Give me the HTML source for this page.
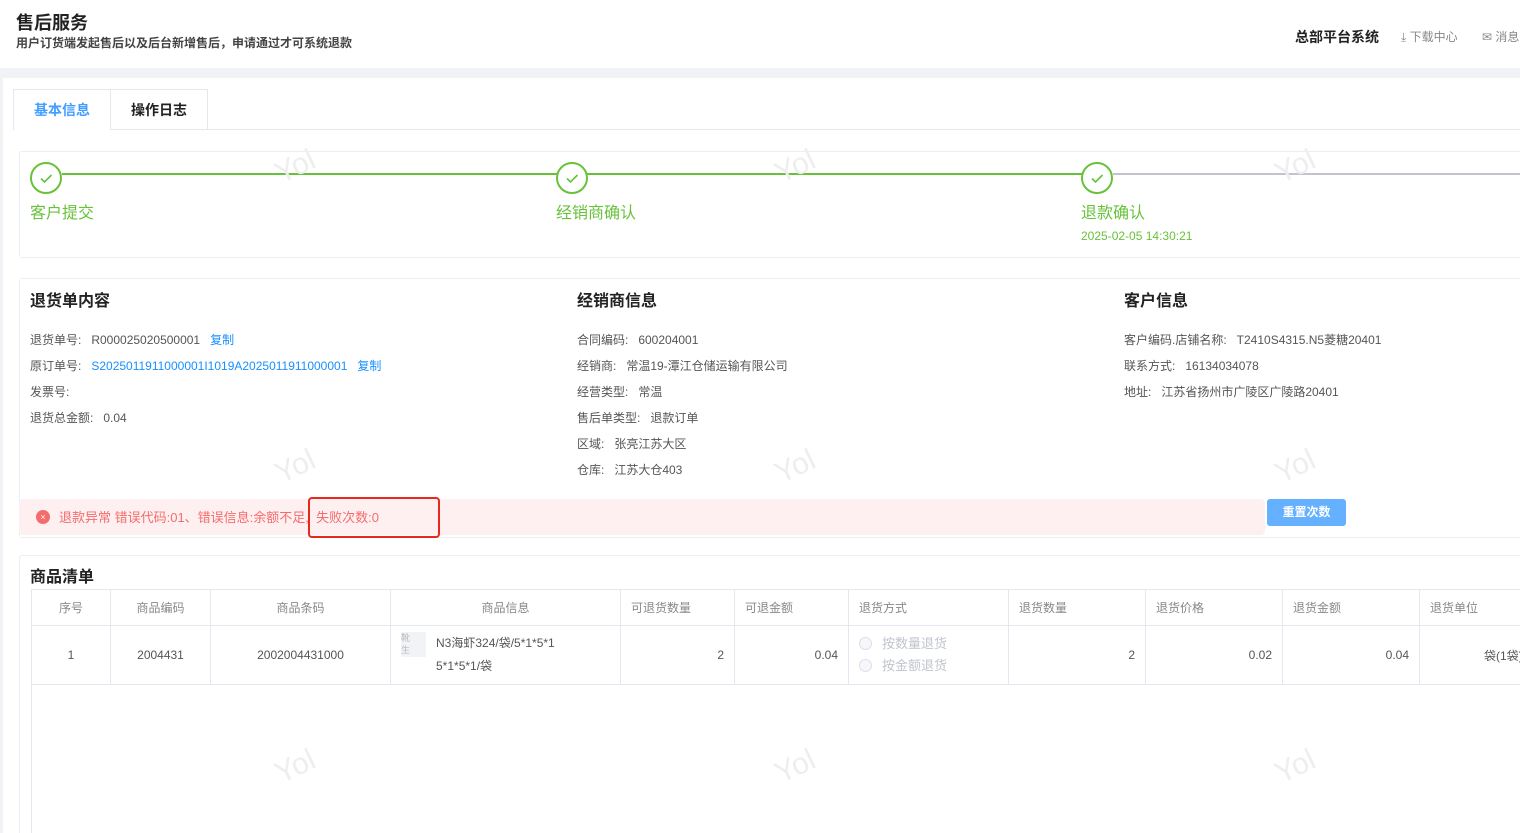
<!DOCTYPE html>
<html><head><meta charset="utf-8"><style>
*{margin:0;padding:0;box-sizing:border-box}
html,body{width:1520px;height:833px;overflow:hidden}
body{background:#f0f2f5;font-family:"Liberation Sans","Noto Sans CJK SC",sans-serif;position:relative;color:#333}
.a{position:absolute;white-space:nowrap}
.hdr{position:absolute;left:0;top:0;width:1520px;height:68px;background:#fff}
.card{position:absolute;left:3px;top:78px;width:1517px;height:755px;background:#fff}
.g{color:#67c23a}
.t13{font-size:12px;color:#555}
.blue{color:#1890ff}
table{border-collapse:collapse;position:absolute;left:31px;top:589px;table-layout:fixed;width:1525px}
td,th{border:1px solid #e4e7ed;font-size:12px;color:#555;font-weight:normal;padding:0 10px}
th{height:36px;color:#888;text-align:left}
td{height:59px}
.wm{position:absolute;color:#eee;font-size:30px;transform:rotate(-25deg)}
</style></head><body>
<div class="hdr">
<div class="a" style="left:16px;top:9px;font-size:18px;font-weight:bold;color:#222">售后服务</div>
<div class="a" style="left:16px;top:34px;font-size:12px;color:#444;font-weight:bold">用户订货端发起售后以及后台新增售后，申请通过才可系统退款</div>
<div class="a" style="left:1295px;top:27px;font-size:14px;font-weight:bold;color:#222">总部平台系统</div>
<div class="a" style="left:1401px;top:28px;font-size:12px;color:#888">⤓ 下载中心</div>
<div class="a" style="left:1482px;top:28px;font-size:12px;color:#888">✉ 消息</div>
</div>
<div class="card"></div>
<div class="a" style="left:13px;top:89px;width:195px;height:41px;border:1px solid #e4e7ed;border-bottom:none;background:#fff"></div>
<div class="a" style="left:110px;top:89px;width:1px;height:41px;background:#e4e7ed"></div>
<div class="a" style="left:208px;top:129px;width:1312px;height:1px;background:#e4e7ed"></div>
<div class="a" style="left:110px;top:129px;width:98px;height:1px;background:#e4e7ed"></div>
<div class="a" style="left:34px;top:100px;font-size:14px;color:#409eff;font-weight:bold">基本信息</div>
<div class="a" style="left:131px;top:100px;font-size:14px;color:#222;font-weight:bold">操作日志</div>
<div class="a" style="left:19px;top:151px;width:1510px;height:107px;border:1px solid #ebeef5;border-radius:3px"></div>
<div class="a" style="left:62px;top:173px;width:1020px;height:2px;background:#67c23a"></div>
<div class="a" style="left:1113px;top:173px;width:410px;height:2px;background:#c0c4cc"></div>
<svg class="a" style="left:30px;top:162px" width="33" height="33"><circle cx="16" cy="16" r="15" fill="#fff" stroke="#67c23a" stroke-width="2"/><path d="M11 16.5l3.5 3.5 7-7" fill="none" stroke="#67c23a" stroke-width="1.6"/></svg>
<svg class="a" style="left:556px;top:162px" width="33" height="33"><circle cx="16" cy="16" r="15" fill="#fff" stroke="#67c23a" stroke-width="2"/><path d="M11 16.5l3.5 3.5 7-7" fill="none" stroke="#67c23a" stroke-width="1.6"/></svg>
<svg class="a" style="left:1081px;top:162px" width="33" height="33"><circle cx="16" cy="16" r="15" fill="#fff" stroke="#67c23a" stroke-width="2"/><path d="M11 16.5l3.5 3.5 7-7" fill="none" stroke="#67c23a" stroke-width="1.6"/></svg>
<div class="a g" style="left:30px;top:199px;font-size:16px">客户提交</div>
<div class="a g" style="left:556px;top:199px;font-size:16px">经销商确认</div>
<div class="a g" style="left:1081px;top:199px;font-size:16px">退款确认</div>
<div class="a g" style="left:1081px;top:229px;font-size:12px">2025-02-05 14:30:21</div>
<div class="a" style="left:19px;top:278px;width:1510px;height:260px;border:1px solid #ebeef5;border-radius:3px"></div>
<div class="a" style="left:30px;top:287px;font-size:16px;font-weight:bold;color:#222">退货单内容</div>
<div class="a" style="left:577px;top:287px;font-size:16px;font-weight:bold;color:#222">经销商信息</div>
<div class="a" style="left:1124px;top:287px;font-size:16px;font-weight:bold;color:#222">客户信息</div>
<div class="a t13" style="left:30px;top:331px">退货单号:&nbsp;&nbsp;&nbsp;R000025020500001&nbsp;&nbsp;&nbsp;<span class="blue">复制</span></div>
<div class="a t13" style="left:30px;top:357px">原订单号:&nbsp;&nbsp;&nbsp;<span class="blue">S2025011911000001I1019A2025011911000001&nbsp;&nbsp;&nbsp;复制</span></div>
<div class="a t13" style="left:30px;top:383px">发票号:</div>
<div class="a t13" style="left:30px;top:409px">退货总金额:&nbsp;&nbsp;&nbsp;0.04</div>
<div class="a t13" style="left:577px;top:331px">合同编码:&nbsp;&nbsp;&nbsp;600204001</div>
<div class="a t13" style="left:577px;top:357px">经销商:&nbsp;&nbsp;&nbsp;常温19-潭江仓储运输有限公司</div>
<div class="a t13" style="left:577px;top:383px">经营类型:&nbsp;&nbsp;&nbsp;常温</div>
<div class="a t13" style="left:577px;top:409px">售后单类型:&nbsp;&nbsp;&nbsp;退款订单</div>
<div class="a t13" style="left:577px;top:435px">区域:&nbsp;&nbsp;&nbsp;张亮江苏大区</div>
<div class="a t13" style="left:577px;top:461px">仓库:&nbsp;&nbsp;&nbsp;江苏大仓403</div>
<div class="a t13" style="left:1124px;top:331px">客户编码.店铺名称:&nbsp;&nbsp;&nbsp;T2410S4315.N5菱糖20401</div>
<div class="a t13" style="left:1124px;top:357px">联系方式:&nbsp;&nbsp;&nbsp;16134034078</div>
<div class="a t13" style="left:1124px;top:383px">地址:&nbsp;&nbsp;&nbsp;江苏省扬州市广陵区广陵路20401</div>
<div class="a" style="left:19px;top:499px;width:1246px;height:36px;background:#fef0f0;border-radius:4px"></div>
<div class="a" style="left:36px;top:510px;width:14px;height:14px;border-radius:50%;background:#f56c6c;color:#fff;font-size:9px;line-height:14px;text-align:center">×</div>
<div class="a" style="left:59px;top:507px;font-size:13px;color:#f56c6c">退款异常 错误代码:01、错误信息:余额不足,&nbsp;&nbsp;失败次数:0</div>
<div class="a" style="left:308px;top:497px;width:132px;height:41px;border:2px solid #e8281f;border-radius:4px"></div>
<div class="a" style="left:1267px;top:499px;width:79px;height:27px;background:#66b1ff;border-radius:3px;color:#fff;font-size:12px;font-weight:bold;text-align:center;line-height:27px">重置次数</div>
<div class="a" style="left:19px;top:555px;width:1510px;height:290px;border:1px solid #ebeef5;border-radius:3px"></div>
<div class="a" style="left:30px;top:563px;font-size:16px;font-weight:bold;color:#222">商品清单</div>
<div class="a" style="left:31px;top:589px;width:1px;height:250px;background:#e4e7ed"></div>
<table>
<colgroup><col style="width:79px"><col style="width:100px"><col style="width:180px"><col style="width:230px"><col style="width:114px"><col style="width:114px"><col style="width:160px"><col style="width:137px"><col style="width:137px"><col style="width:137px"><col style="width:137px"></colgroup>
<tr><th style="text-align:center">序号</th><th style="text-align:center">商品编码</th><th style="text-align:center">商品条码</th><th style="text-align:center">商品信息</th><th>可退货数量</th><th>可退金额</th><th>退货方式</th><th>退货数量</th><th>退货价格</th><th>退货金额</th><th>退货单位</th></tr>
<tr><td style="text-align:center">1</td><td style="text-align:center">2004431</td><td style="text-align:center">2002004431000</td>
<td style="position:relative"><div style="position:absolute;left:10px;top:6px;width:25px;height:25px;background:#f2f3f6;color:#bbb;font-size:9px;line-height:12px">靴<br>生</div><div style="margin-left:35px;line-height:23px">N3海虾324/袋/5*1*5*1<br>5*1*5*1/袋</div></td>
<td style="text-align:right">2</td><td style="text-align:right">0.04</td>
<td style="color:#c0c4cc;font-size:13px;line-height:22px"><span style="display:inline-block;width:13px;height:13px;border:1px solid #dcdfe6;border-radius:50%;vertical-align:-2px;margin-right:10px;background:#f5f7fa"></span>按数量退货<br><span style="display:inline-block;width:13px;height:13px;border:1px solid #dcdfe6;border-radius:50%;vertical-align:-2px;margin-right:10px;background:#f5f7fa"></span>按金额退货</td>
<td style="text-align:right">2</td><td style="text-align:right">0.02</td><td style="text-align:right">0.04</td><td style="text-align:left;padding-left:64px;white-space:nowrap;overflow:hidden">袋(1袋)</td></tr>
</table>
<div class="wm" style="left:275px;top:150px">Yol</div><div class="wm" style="left:775px;top:150px">Yol</div><div class="wm" style="left:1275px;top:150px">Yol</div>
<div class="wm" style="left:275px;top:450px">Yol</div><div class="wm" style="left:775px;top:450px">Yol</div><div class="wm" style="left:1275px;top:450px">Yol</div>
<div class="wm" style="left:275px;top:750px">Yol</div><div class="wm" style="left:775px;top:750px">Yol</div><div class="wm" style="left:1275px;top:750px">Yol</div>
</body></html>
